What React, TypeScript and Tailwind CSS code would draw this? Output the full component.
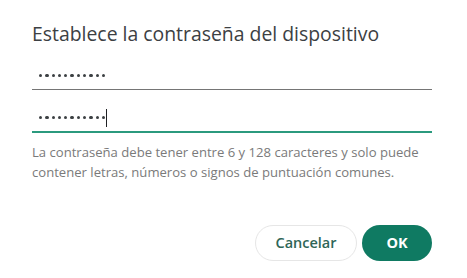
const dots = Array.from({ length: 11 });

function Dots() {
  return (
    <div className="flex gap-[3px]">
      {dots.map((_, i) => (
        <span key={i} className="w-[3.3px] h-[3.3px] rounded-full bg-[#3c4043]" />
      ))}
    </div>
  );
}

export default function App() {
  return (
    <div
      className="w-[467px] h-[278px] bg-white pl-[32px] pr-[35px] pt-[21px]"
      style={{ fontFamily: '"Open Sans", "Noto Sans", sans-serif' }}
    >
      <h2 className="text-[19.4px] leading-[26px] text-[#3c4043]">
        Establece la contraseña del dispositivo
      </h2>
      <div className="mt-[17px] h-[26px] border-b border-[#757575] flex items-center pl-[7px] pb-[2px]">
        <Dots />
      </div>
      <div className="mt-[16px] h-[27px] border-b-2 border-[#2b9a7e] flex items-center pl-[7px] pb-[2px]">
        <Dots />
        <span className="ml-[1px] w-px h-[18px] bg-[#202124]" />
      </div>
      <p className="mt-[9px] text-[13.1px] leading-[20px] text-[#7a7a7a] whitespace-nowrap">
        La contraseña debe tener entre 6 y 128 caracteres y solo puede
        <br />
        contener letras, números o signos de puntuación comunes.
      </p>
      <div className="mt-[43px] flex justify-end gap-[5px]">
        <button className="w-[102px] h-[36px] rounded-full border border-[#e6e6e6] bg-white text-[#2f6657] text-[14.5px] font-semibold">
          Cancelar
        </button>
        <button className="w-[70px] h-[36px] rounded-full bg-[#0f7a62] text-white text-[14.5px] font-bold">
          OK
        </button>
      </div>
    </div>
  );
}
